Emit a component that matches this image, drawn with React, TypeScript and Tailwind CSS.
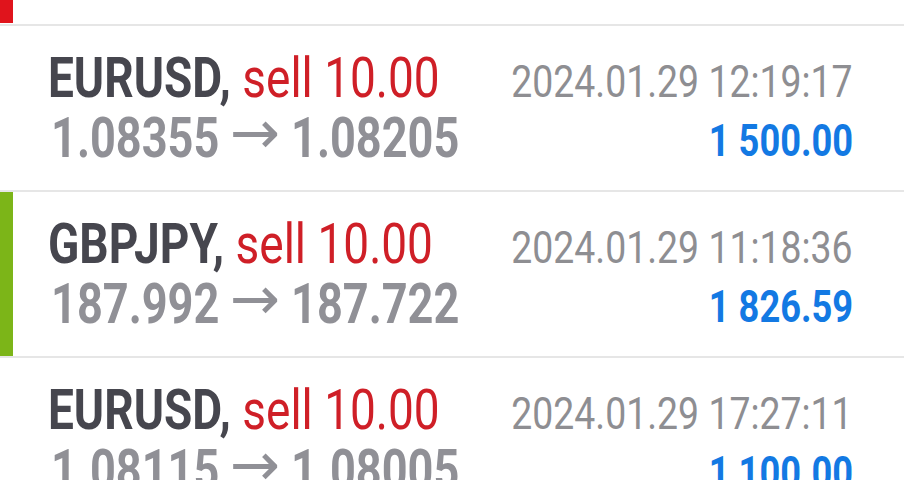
const deals = [
  {
    symbol: "EURUSD",
    side: "sell 10.00",
    open: "1.08355",
    close: "1.08205",
    time: "2024.01.29 12:19:17",
    profit: "1 500.00",
    bar: "bg-transparent",
  },
  {
    symbol: "GBPJPY",
    side: "sell 10.00",
    open: "187.992",
    close: "187.722",
    time: "2024.01.29 11:18:36",
    profit: "1 826.59",
    bar: "bg-[#7cb518]",
  },
  {
    symbol: "EURUSD",
    side: "sell 10.00",
    open: "1.08115",
    close: "1.08005",
    time: "2024.01.29 17:27:11",
    profit: "1 100.00",
    bar: "bg-transparent",
  },
];

// Roboto squeezed horizontally to look like the condensed face of the app
export default function App() {
  return (
    <div className="w-[904px] h-[480px] overflow-hidden bg-white font-['Roboto',sans-serif]">
      {/* previous deal, cut off at the top */}
      <div className="flex h-[26px] border-b-2 border-[#e6e6e6]">
        <div className="w-[13px] h-[23px] shrink-0 bg-[#e0141c]" />
      </div>

      {deals.map((d, i) => (
        <div key={i} className="flex h-[166px] border-b-2 border-[#e6e6e6]">
          <div className={`w-[13px] shrink-0 self-stretch ${d.bar}`} />
          <div className="flex-1 min-w-0 flex pl-[35px] pr-[51px]">
            {/* left: symbol + prices */}
            <div className="flex-1 min-w-0 flex flex-col pt-[22px] whitespace-nowrap">
              <div className="leading-[60px] text-[55px]">
                <span className="inline-block origin-left scale-x-[0.836]">
                  <span className="font-bold text-[#46464e]">{d.symbol},</span>
                  <span className="text-[#cf1f27]"> {d.side}</span>
                </span>
              </div>
              <div className="flex items-baseline leading-[60px] text-[55px] font-bold text-[#909096]">
                <span className="inline-block w-[167px] shrink-0 ml-[3px] origin-left scale-x-[0.82]">{d.open}</span>
                <span className="inline-block leading-[40px] relative -top-[4px] ml-[12px] font-['DejaVu_Sans',sans-serif] font-normal text-[60px]">→</span>
                <span className="inline-block w-[170px] shrink-0 ml-[11px] origin-left scale-x-[0.82]">{d.close}</span>
              </div>
            </div>
            {/* right: time + profit */}
            <div className="shrink-0 flex flex-col items-end pt-[27px] whitespace-nowrap">
              <span className="inline-block leading-[58px] text-[44px] text-[#8e8e92] origin-right scale-x-[0.85]">
                {d.time}
              </span>
              <span className="inline-block leading-[60px] text-[45px] font-bold text-[#1379e3] origin-right scale-x-[0.806]">
                {d.profit}
              </span>
            </div>
          </div>
        </div>
      ))}
    </div>
  );
}
